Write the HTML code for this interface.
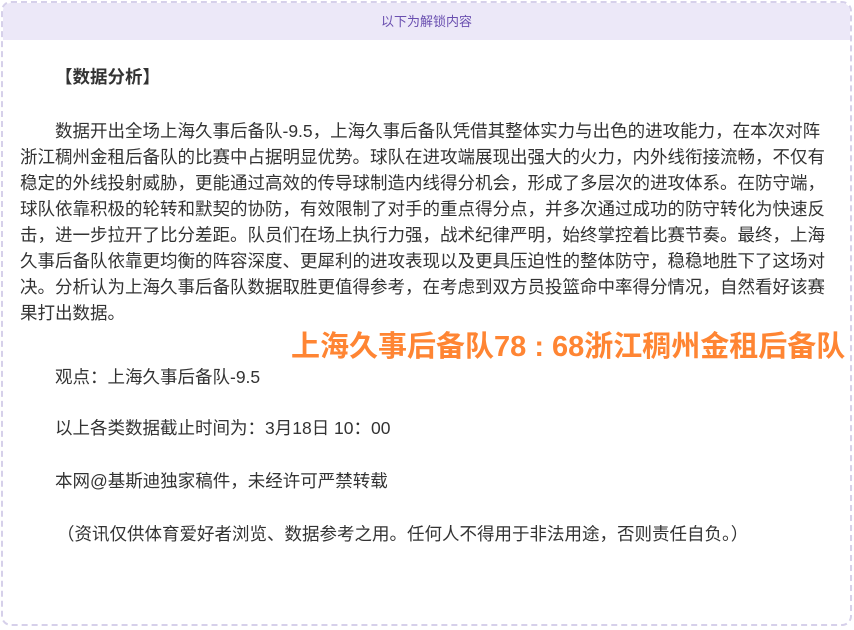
<!DOCTYPE html>
<html><head><meta charset="utf-8"><style>
*{margin:0;padding:0;box-sizing:border-box}
body{width:854px;height:630px;background:#fff;font-family:"Liberation Sans","Noto Sans CJK SC",sans-serif;color:#333;position:relative;overflow:hidden}
.box{position:absolute;left:1px;top:1px;width:851px;height:625px;border:2px dashed #d6d0ea;border-radius:10px;overflow:hidden}
.hd{height:37px;background:#ece8f8;color:#6a4fb0;font-size:13px;text-align:center;line-height:37px}
.t{position:absolute;left:20px;font-size:17.5px;line-height:26px;white-space:nowrap}
.orange{position:absolute;left:291px;top:330px;font-size:29px;font-weight:bold;color:#ff8533;white-space:nowrap;line-height:34px}
</style></head><body>
<div class="box"><div class="hd">以下为解锁内容</div></div>
<div class="t" style="top:64px;left:55px;font-weight:bold">【数据分析】</div>
<div class="t" style="top:118px">　　数据开出全场上海久事后备队-9.5，上海久事后备队凭借其整体实力与出色的进攻能力，在本次对阵<br>浙江稠州金租后备队的比赛中占据明显优势。球队在进攻端展现出强大的火力，内外线衔接流畅，不仅有<br>稳定的外线投射威胁，更能通过高效的传导球制造内线得分机会，形成了多层次的进攻体系。在防守端，<br>球队依靠积极的轮转和默契的协防，有效限制了对手的重点得分点，并多次通过成功的防守转化为快速反<br>击，进一步拉开了比分差距。队员们在场上执行力强，战术纪律严明，始终掌控着比赛节奏。最终，上海<br>久事后备队依靠更均衡的阵容深度、更犀利的进攻表现以及更具压迫性的整体防守，稳稳地胜下了这场对<br>决。分析认为上海久事后备队数据取胜更值得参考，在考虑到双方员投篮命中率得分情况，自然看好该赛<br>果打出数据。</div>
<div class="orange">上海久事后备队78 : 68浙江稠州金租后备队</div>
<div class="t" style="top:364px">　　观点：上海久事后备队-9.5</div>
<div class="t" style="top:415px">　　以上各类数据截止时间为：3月18日 10：00</div>
<div class="t" style="top:468px">　　本网@基斯迪独家稿件，未经许可严禁转载</div>
<div class="t" style="top:521px;left:57px">（资讯仅供体育爱好者浏览、数据参考之用。任何人不得用于非法用途，否则责任自负。）</div>
</body></html>
